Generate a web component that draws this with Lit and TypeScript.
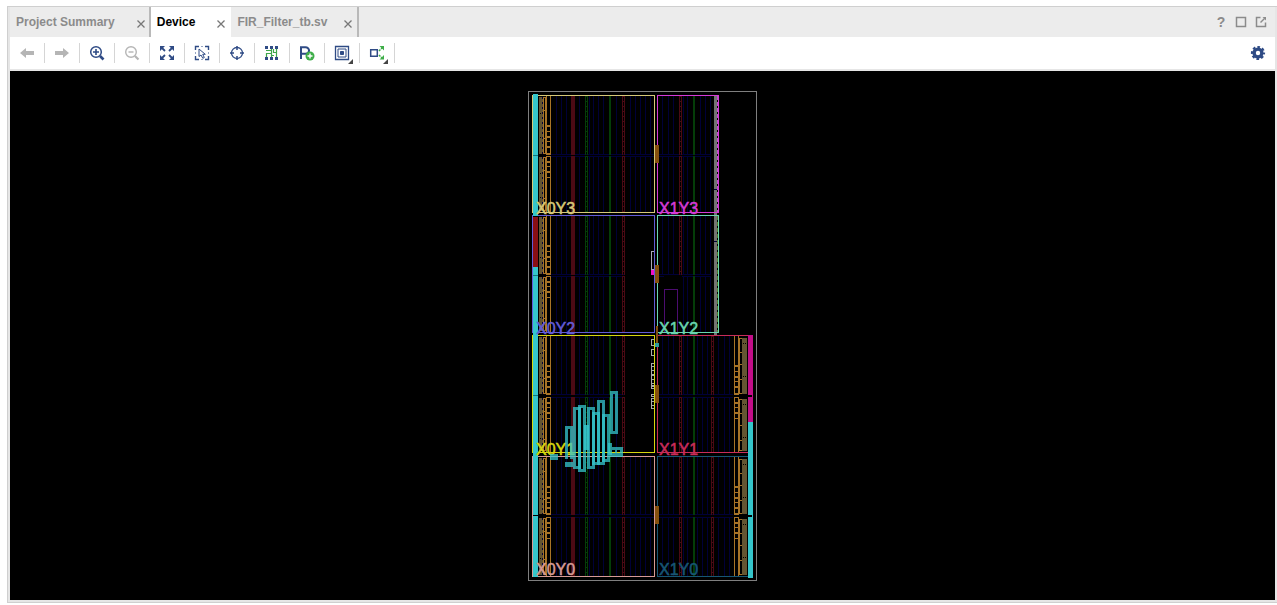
import { LitElement, html, css, svg, nothing } from "lit";
import { customElement, state } from "lit/decorators.js";

const NAVY = "#000038";
const ORANGE = "#a87427";
const OLIVE = "#645532";
const CYAN = "#35c6cb";
const RED = "#4b0a14";
const GREEN = "#043d08";

const box = (x: number, y: number, w: number, h: number, fill: string, opacity = 1) =>
  svg`<rect x=${x} y=${y} width=${w} height=${h} fill=${fill} opacity=${opacity}></rect>`;

const frame = (x1: number, y1: number, x2: number, y2: number, color: string) =>
  svg`<rect x=${x1 + 0.5} y=${y1 + 0.5} width=${x2 - x1} height=${y2 - y1} fill="none" stroke=${color}></rect>`;

const dashed = (x: number, y: number, h: number, color: string, dash = "3 2") =>
  svg`<line x1=${x + 0.5} x2=${x + 0.5} y1=${y} y2=${y + h} stroke=${color} stroke-dasharray=${dash}></line>`;

const dashedPair = (x: number, y: number, h: number, color: string) => svg`
  ${box(x, y, 1, h, color)}${box(x + 2, y, 1, h, color)}${dashed(x + 1, y, h, color, "1 4")}`;

interface Region {
  name: string;
  color: string;
  left: boolean;
  top: number;
  bottom: number;
  mid: number;
  lower: number;
  baseline: number;
}

const ROWS = [
  { top: 95, bottom: 212, mid: 154, lower: 156, baseline: 214 },
  { top: 215, bottom: 332, mid: 274, lower: 276, baseline: 334 },
  { top: 335, bottom: 452, mid: 394, lower: 397, baseline: 455 },
  { top: 456, bottom: 576, mid: 514, lower: 517, baseline: 575 },
];

const REGIONS: Region[] = [
  { name: "X0Y3", color: "#d6c878", left: true, ...ROWS[0] },
  { name: "X0Y2", color: "#625bd6", left: true, ...ROWS[1] },
  { name: "X0Y1", color: "#d6d60e", left: true, ...ROWS[2] },
  { name: "X0Y0", color: "#d69a95", left: true, ...ROWS[3] },
  { name: "X1Y3", color: "#d63ad6", left: false, ...ROWS[0] },
  { name: "X1Y2", color: "#69d6af", left: false, ...ROWS[1] },
  { name: "X1Y1", color: "#c92c58", left: false, ...ROWS[2] },
  { name: "X1Y0", color: "#175673", left: false, ...ROWS[3] },
];

const LEFT_COLUMNS = [556, 561, 566, 579, 589, 593, 598, 603, 616];
const LEFT_EXTRA = [630, 635, 640, 645, 650];
const RIGHT_COLUMNS = [662, 668, 673, 683, 687, 700, 705, 710];
const WIDE_COLUMNS = [662, 668, 673, 683, 687, 697, 702, 707, 718, 724, 729];

const ladder = (x: number, y: number, h: number, upper: boolean) => svg`
  ${box(x, y, 1, h, ORANGE)}${box(x + 4, y, 1, h, ORANGE)}
  ${upper ? box(x, y + h - 2, 5, 2, ORANGE) : box(x, y, 5, 1, ORANGE)}
  ${(upper ? [29, 35, 40, 45, 50] : [5, 10, 15, 21]).map((d, i) =>
    box(x, y + d, 5, i % 2 ? 1 : 2, ORANGE))}`;

const ioLeft = (y: number, h: number, upper: boolean) => svg`
  ${box(539, y + 1, 4, h - 2, OLIVE)}
  ${dashed(542, y + 1, h - 2, NAVY, "2 3")}
  ${box(543, y + 1, 1, h - 2, ORANGE)}${box(545, y + 1, 1, h - 2, ORANGE)}
  ${[1, 14, 42, h - 2].map((d) => box(543, y + d, 3, 1, ORANGE))}
  ${[17, 41].map((d) => box(540, y + d, 1, 1, "#000"))}
  ${ladder(546, y, h, upper)}`;

const ioRight = (y: number, h: number, upper: boolean) => svg`
  ${ladder(734, y, h, upper)}
  ${box(739, y + 2, 1, h - 3, ORANGE)}
  ${[2, 16, 28, 43, h - 2].map((d) => box(739, y + d, 3, 1, ORANGE))}
  ${box(742, y + 2, 5, h - 3, OLIVE)}
  ${[7, 40].map((d) => svg`${box(743, y + d, 1, 1, "#000")}${box(745, y + d, 1, 1, "#000")}`)}`;

const halfTile = (r: Region, y: number, h: number, upper: boolean) => {
  if (r.left) {
    const full = r.name === "X0Y3" || r.name === "X0Y0";
    return svg`
      ${LEFT_COLUMNS.map((x) => box(x, y, 1, h, NAVY))}
      ${full ? LEFT_EXTRA.map((x) => box(x, y, 1, h, NAVY)) : nothing}
      ${box(551, upper ? y + h - 1 : y, full ? 103 : 73, 1, NAVY)}
      ${box(571, y, 4, h, RED)}
      ${dashedPair(585, y, h, GREEN)}
      ${box(609, y, 2, h, GREEN)}
      ${dashedPair(622, y, h, RED)}
      ${ioLeft(y, h, upper)}`;
  }
  const wide = r.top > 300;
  const carved = r.name === "X1Y2" && !upper;
  const columns = (wide ? WIDE_COLUMNS : RIGHT_COLUMNS).filter((x) => !carved || x > 680);
  return svg`
    ${columns.map((x) => box(x, y, 1, h, NAVY))}
    ${carved ? box(658, y, 6, 1, NAVY) : nothing}
    ${box(carved ? 682 : 658, upper ? y + h - 1 : y, (wide ? 733 : 711) - (carved ? 682 : 658), 1, NAVY)}
    ${carved ? nothing : dashedPair(679, y, h, RED)}
    ${box(693, y, 2, h, GREEN)}
    ${wide ? svg`${dashedPair(711, y, h, RED)}${ioRight(y, h, upper)}` : nothing}`;
};

const regionFabric = (r: Region) => svg`
  ${halfTile(r, r.top + 1, r.mid - r.top, true)}
  ${halfTile(r, r.lower, r.bottom - r.lower, false)}`;

const PLACED: [number, number, number, number][] = [
  [573, 407, 581, 469],
  [578, 405, 586, 472],
  [587, 407, 595, 469],
  [592, 412, 600, 465],
  [597, 400, 605, 465],
  [602, 414, 610, 462],
  [610, 391, 618, 434],
];

const PADS: [number, number][] = [
  [339, 345], [349, 355], [363, 366], [366, 370], [370, 374], [375, 379],
  [379, 383], [383, 385], [386, 388], [394, 396], [398, 401], [401, 405], [405, 408],
];

@customElement("device-floorplan")
export class DeviceFloorplan extends LitElement {
  static styles = css`
    :host { display: block; }
    svg { display: block; shape-rendering: crispEdges; }
    text {
      font: 16px "Liberation Sans", Arial, sans-serif;
      stroke-width: 0.5;
    }
  `;

  render() {
    return html`
      <svg width="229" height="490" viewBox="528 91 229 490" role="img" aria-label="Device floorplan">
        ${REGIONS.map(regionFabric)}
        ${box(714, 96, 3, 239, "#737373")}
        ${box(714, 189, 3, 1, NAVY)}${box(714, 241, 3, 1, NAVY)}
        ${dashed(717, 96, 117, "#c04fd0", "4 2")}
        ${dashed(717, 216, 117, "#4f7c2c", "4 2")}
        ${REGIONS.map((r) => frame(r.left ? 532 : 657, r.top, r.left ? 654 : r.top > 300 ? 750 : 718, r.bottom, r.color))}
        ${box(533, 94, 5, 122, CYAN)}
        ${box(533, 217, 5, 50, "#8a1015")}
        ${box(533, 267, 5, 310, CYAN)}
        ${[155, 275, 395, 515].map((y) => box(533, y, 5, 1, y === 515 ? "#000" : "#15767c"))}
        ${box(748, 335, 5, 87, "#c20d88")}
        ${box(748, 422, 5, 156, CYAN)}
        ${[395, 515].map((y) => box(734, y, 18, 2, "#000"))}
        ${[145, 265, 385, 506].map((y) => box(655, y, 4, 18, "#85500f"))}
        ${box(656, 326, 2, 17, "#85500f")}
        ${box(655, 343, 4, 4, "#2b9a9e")}
        <path d="M664.5 332V289.5H677.5V332" fill="none" stroke="#4c0d70"></path>
        ${frame(651, 251, 654, 269, "#aaa8b8")}
        ${box(654, 251, 1, 20, "#625bd6")}
        ${box(651, 270, 3, 5, "#f010c8")}
        ${PADS.map(([a, b]) => svg`<path d="M654 ${a + 0.5}H651.5V${b + 0.5}H654" fill="none" stroke="#aaa"></path>`)}
        ${REGIONS.map((r) => svg`<text x=${r.left ? 536 : 659} y=${r.baseline} fill=${r.color} stroke=${r.color}>${r.name}</text>`)}
        ${PLACED.map(([x1, y1, x2, y2]) => svg`
          <rect x=${x1 + 1.5} y=${y1 + 1.5} width=${x2 - x1 - 3} height=${y2 - y1 - 3}
            fill="none" stroke=${CYAN} stroke-width="3" opacity="0.75"></rect>`)}
        <path d="M573 427.5H566.5V459M571.5 429V459" fill="none" stroke=${CYAN} stroke-width="3" opacity="0.75"></path>
        ${box(565, 462, 8, 5, CYAN, 0.75)}
        ${box(584, 425, 5, 25, CYAN, 0.85)}
        ${box(608, 443, 4, 12, CYAN, 0.75)}
        ${box(612, 447, 11, 3, CYAN, 0.75)}
        ${box(610, 453, 13, 4, CYAN, 0.75)}
        ${box(615, 450, 2, 3, CYAN, 0.75)}
        ${box(620, 450, 3, 3, CYAN, 0.75)}
        ${box(550, 454, 8, 6, CYAN, 0.75)}
        ${frame(528, 91, 756, 580, "#7f7f7f")}
      </svg>`;
  }
}

const BLUE = "#2f4b85";
const GRAY = "#b5b5b5";

const ICONS = {
  back: svg`<path d="M1 8 7 3V6H15V10H7V13Z" fill=${GRAY}/>`,
  forward: svg`<path d="M15 8 9 3V6H1V10H9V13Z" fill=${GRAY}/>`,
  zoomIn: svg`<g fill="none" stroke=${BLUE}><circle cx="7" cy="7" r="5.3" stroke-width="1.5"/><path d="M4 7H10M7 4V10" stroke-width="1.6"/><path d="M11 11 14.5 14.5" stroke-width="2.6"/></g>`,
  zoomOut: svg`<g fill="none" stroke=${GRAY}><circle cx="7" cy="7" r="5.3" stroke-width="1.4"/><path d="M4.5 7H9.5" stroke-width="1.4"/><path d="M11 11 14.5 14.5" stroke-width="2.2"/></g>`,
  fit: svg`<g fill=${BLUE}><path d="M1 1H6L1 6ZM15 1V6L10 1ZM1 15V10L6 15ZM15 15H10L15 10Z"/><path d="M3 3 6 6M13 3 10 6M3 13 6 10M13 13 10 10" stroke=${BLUE} stroke-width="1.800"/></g>`,
  select: svg`<g fill="none" stroke=${BLUE}><path d="M1.500 5V1.500H5M11 1.500H14.500V5M14.500 11V14.500H11M5 14.500H1.500V11" stroke-width="1.400"/><path d="M7 1.500H9M7 14.500H9M1.500 7V9M14.500 7V9" stroke-width="1" opacity=".5"/><path d="M5 4V11.500L7 10 8.800 13.300 10.300 12.500 8.700 9.300H11.300Z" stroke-width="1"/></g>`,
  target: svg`<g fill="none" stroke=${BLUE}><circle cx="8" cy="8" r="5.500" stroke-width="1.300"/><path d="M8 1V5M8 11V15M1 8H5M11 8H15" stroke-width="1.500"/></g>`,
  route: svg`<g><path d="M1 1H4V4H1ZM6 1H9V4H6ZM11 1H14V4H11ZM1 12H4V15H1ZM6 12H9V15H6ZM11 12H14V15H11Z" fill=${BLUE}/><path d="M2 5.500H7.500V8.500H2.500V12M7.500 12V9M7.500 5.500V4M12.500 4V12M9.500 4V7.500H12.500M7.500 10.500H10" fill="none" stroke="#3fa64b" stroke-width="1.200"/></g>`,
  place: svg`<g><path d="M2 14V2.200H6.500A3.500 3.200 0 0 1 6.500 8.700H2" fill="none" stroke=${BLUE} stroke-width="2"/><circle cx="11" cy="11" r="4.500" fill="#3fae49"/><path d="M8.500 11H13.500M11 8.500V13.500" stroke="#fff" stroke-width="1.400"/></g>`,
  layers: svg`<g fill="none" stroke=${BLUE}><path d="M1.500 1.500H14.500V14.500H1.500Z" stroke-width="1.300"/><path d="M4 4H12V12H4Z"/><path d="M6.500 6.500H9.500V9.500H6.500Z" fill=${BLUE}/></g>`,
  connect: svg`<g><path d="M1.700 4.700H8.300V11.300H1.700Z" fill="none" stroke=${BLUE} stroke-width="1.500"/><path d="M10 6 13.500 2.500M10 10 13 13" stroke="#3fae49" stroke-width="1.500" stroke-dasharray="2 1"/><path d="M10.500 1H15V5.500ZM10.500 14.500H15V10Z" fill="#3fae49"/></g>`,
  gear: svg`<g fill="none" stroke=${BLUE}><circle cx="8" cy="8" r="3.900" stroke-width="3.400"/><circle cx="8" cy="8" r="6" stroke-width="2.200" stroke-dasharray="2.600 2.112" stroke-dashoffset="1.300"/></g>`,
  maximize: svg`<path d="M3.500 3.500H12.500V12.500H3.500Z" fill="none" stroke="#8b8b8b" stroke-width="1.500"/>`,
  float: svg`<g fill="none" stroke="#8b8b8b" stroke-width="1.500"><path d="M7.500 3.500H3.500V12.500H12.500V8.500"/><path d="M7.500 8.500 11.500 4.500"/><path d="M9.500 3H13V6.500Z" fill="#8b8b8b" stroke="none"/></g>`,
};

type IconName = keyof typeof ICONS;

const icon = (name: IconName) =>
  html`<svg class="icon" viewBox="0 0 16 16" aria-hidden="true">${ICONS[name]}</svg>`;

const TOOLS: { icon: IconName; label: string; disabled?: boolean; menu?: boolean }[] = [
  { icon: "back", label: "Back", disabled: true },
  { icon: "forward", label: "Forward", disabled: true },
  { icon: "zoomIn", label: "Zoom in" },
  { icon: "zoomOut", label: "Zoom out", disabled: true },
  { icon: "fit", label: "Zoom fit" },
  { icon: "select", label: "Select area" },
  { icon: "target", label: "Autofit selection" },
  { icon: "route", label: "Routing resources" },
  { icon: "place", label: "Draw Pblock" },
  { icon: "layers", label: "Cell drag mode", menu: true },
  { icon: "connect", label: "Show connections", menu: true },
];

const TABS = ["Project Summary", "Device", "FIR_Filter_tb.sv"];

@customElement("app-root")
export class AppRoot extends LitElement {
  static styles = css`
    :host {
      display: flex;
      box-sizing: border-box;
      height: 100vh;
      padding: 6px 0 2px 7px;
      background: #fff;
      font: bold 12px/16px "Liberation Sans", Arial, sans-serif;
    }
    .window {
      display: flex;
      flex: 1;
      flex-direction: column;
      min-width: 0;
      box-sizing: border-box;
      border: 1px solid #cfcfcf;
      border-right: 0;
      background: #e6e6e6;
      padding: 0 2px;
    }
    button {
      display: inline-flex;
      align-items: center;
      justify-content: center;
      border: 0;
      padding: 0;
      background: none;
      color: inherit;
      font: inherit;
    }
    .tabbar {
      display: flex;
      align-items: stretch;
      height: 30px;
      flex: none;
      background: #ececec;
      color: #8b8b8b;
    }
    .tab {
      display: flex;
      align-items: center;
      justify-content: space-between;
      gap: 21px;
      padding: 0 5px 0 6px;
    }
    .tab.first { border-right: 2px solid #b9b9b9; padding-right: 3px; }
    .tab.last { border-right: 2px solid #b9b9b9; gap: 16px; padding-right: 4px; }
    .tab.active { background: #fff; color: #000; }
    .close { width: 10px; height: 16px; color: #777; }
    .close svg { width: 8px; height: 8px; margin-top: 3px; }
    .controls { display: flex; align-items: center; gap: 4px; margin-left: auto; padding-right: 6px; }
    .controls button { width: 16px; height: 16px; }
    .controls .help { font-size: 14px; }
    .icon { display: block; width: 16px; height: 16px; }
    .toolbar {
      display: flex;
      align-items: center;
      height: 32px;
      flex: none;
      background: #fff;
      border-bottom: 2px solid #e6e6e6;
    }
    .tool {
      position: relative;
      width: 35px;
      height: 20px;
      border-right: 1px solid #d5d5d5;
    }
    .menu::after {
      content: "";
      position: absolute;
      right: 6px;
      bottom: -1px;
      border-left: 5px solid transparent;
      border-bottom: 5px solid #444;
    }
    .settings { margin-left: auto; padding-right: 9px; }
    .canvas {
      display: flex;
      flex: 1;
      align-items: center;
      justify-content: center;
      min-height: 0;
      margin-bottom: 2px;
      padding-top: 1px;
      background: #000;
    }
  `;

  @state() private active = 1;

  render() {
    return html`
      <main class="window">
        <header class="tabbar">
          ${TABS.map((name, i) => html`
            <div class="tab ${i === 0 ? "first" : i === 2 ? "last" : ""} ${i === this.active ? "active" : ""}">
              <button @click=${() => (this.active = i)}>${name}</button>
              <button class="close" aria-label="Close ${name}">
                <svg viewBox="0 0 8 8" aria-hidden="true"><path d="M.5 .5 7.500 7.500M7.500 .5 .5 7.500" stroke="currentColor" stroke-width="1.300"/></svg>
              </button>
            </div>`)}
          <div class="controls">
            <button class="help" aria-label="Help">?</button>
            <button aria-label="Maximize">${icon("maximize")}</button>
            <button aria-label="Float">${icon("float")}</button>
          </div>
        </header>
        <nav class="toolbar" aria-label="Device tools">
          ${TOOLS.map((t) => html`
            <button class="tool ${t.menu ? "menu" : ""}" aria-label=${t.label} ?disabled=${t.disabled}>${icon(t.icon)}</button>`)}
          <button class="settings" aria-label="Settings">${icon("gear")}</button>
        </nav>
        <section class="canvas"><device-floorplan></device-floorplan></section>
      </main>`;
  }
}
